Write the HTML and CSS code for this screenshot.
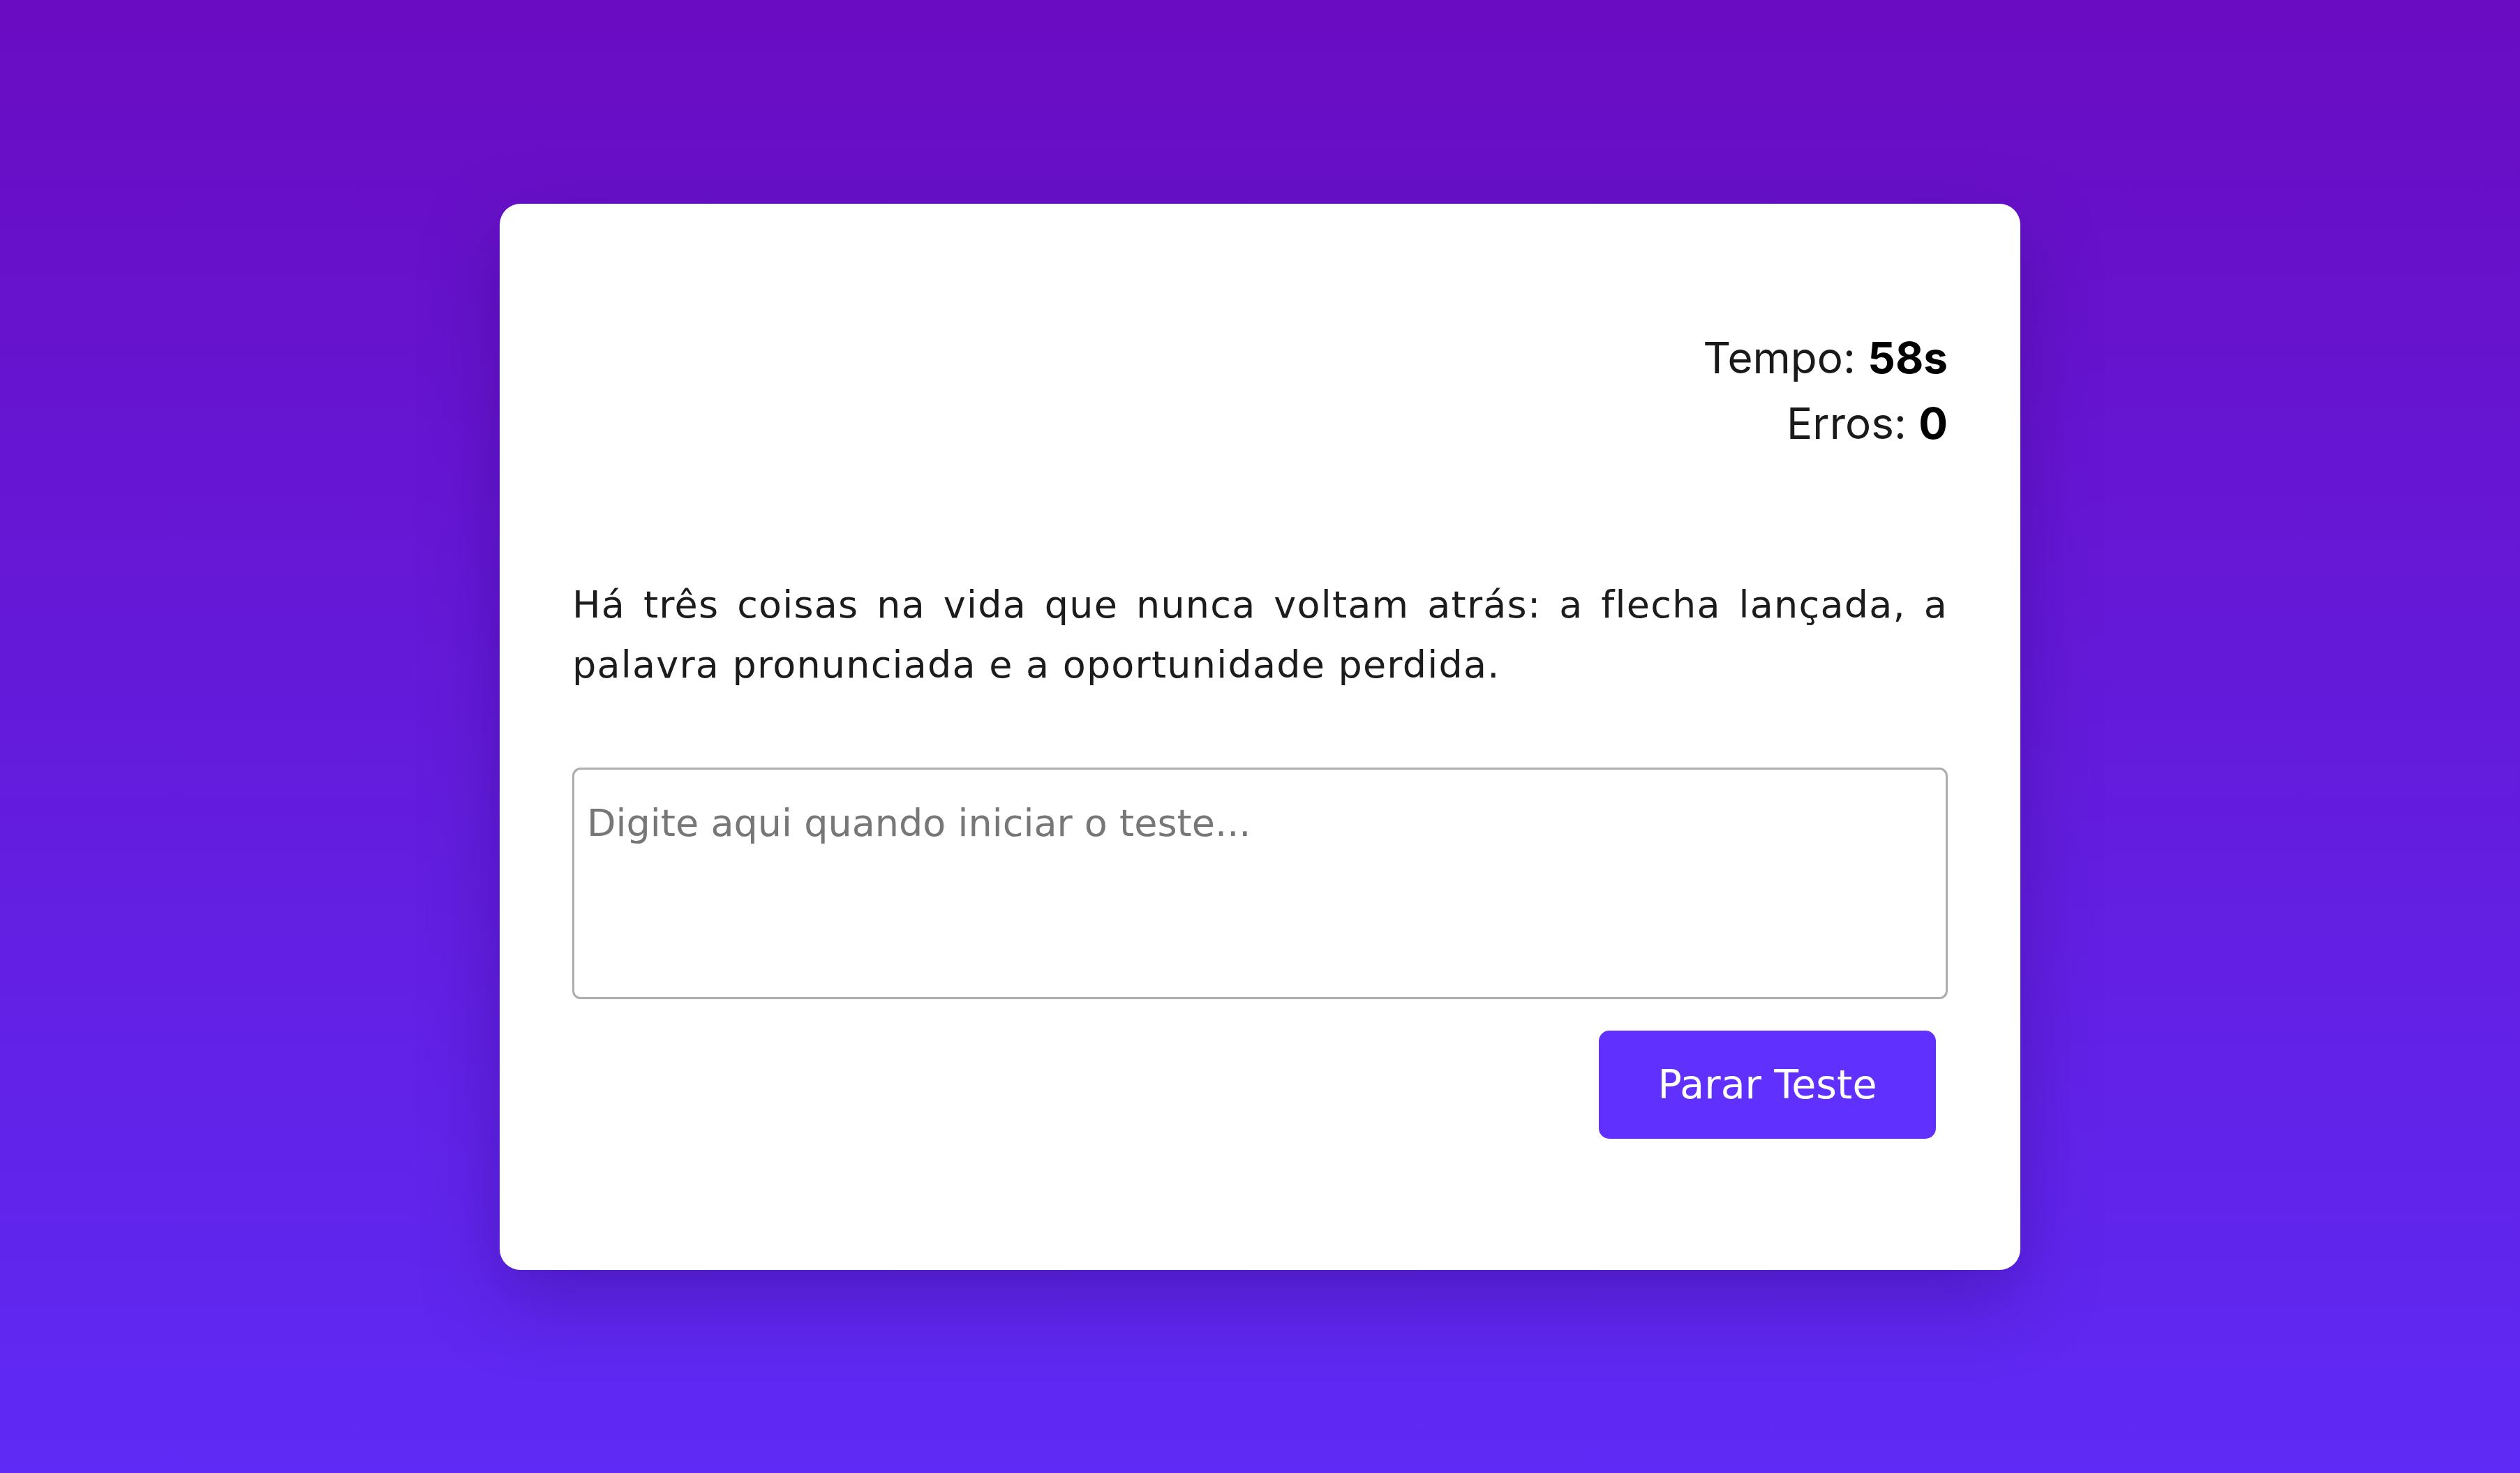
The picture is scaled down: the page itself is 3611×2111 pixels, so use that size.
FILE: index.html
```html
<!DOCTYPE html>
<html lang="pt-BR">
<head>
<meta charset="utf-8">
<title>Teste de Digitação</title>
<link rel="stylesheet" href="styles.css">
</head>
<body>
  <main class="card">
    <div class="stats">
      <div class="stat">Tempo: <strong>58s</strong></div>
      <div class="stat">Erros: <strong>0</strong></div>
    </div>
    <p class="quote">Há três coisas na vida que nunca voltam atrás: a flecha lançada, a palavra pronunciada e a oportunidade perdida.</p>
    <textarea class="typing" placeholder="Digite aqui quando iniciar o teste..."></textarea>
    <div class="actions">
      <button class="btn" type="button">Parar Teste</button>
    </div>
  </main>
</body>
</html>
```
FILE: styles.css
```css
* { box-sizing: border-box; }

html, body { height: 100%; }

body {
  margin: 0;
  min-height: 100vh;
  display: flex;
  align-items: center;
  justify-content: center;
  background: linear-gradient(180deg, #690cc2 0%, #5f2af5 100%);
  font-family: "DejaVu Sans", "Noto Sans", sans-serif;
  color: #1e1e1e;
}

.card {
  width: 2179px;
  background: #ffffff;
  border-radius: 30px;
  padding: 104px;
  box-shadow: 0 40px 110px rgba(40, 0, 110, 0.35);
}

.stats {
  margin-top: 70px;
  text-align: right;
  font-family: Inter, Roboto, sans-serif;
  font-size: 62px;
  line-height: 94px;
  color: #1a1a1a;
}

.stats strong { font-weight: 700; color: #000; }

.quote {
  margin: 170px 0 0;
  font-size: 54px;
  line-height: 86px;
  letter-spacing: 1.2px;
  text-align: justify;
  color: #1c1c1c;
}

.typing {
  display: block;
  width: 100%;
  height: 332px;
  margin-top: 104px;
  padding: 40px 18px 30px;
  border: 3px solid #adadad;
  border-radius: 12px;
  font-family: "DejaVu Sans", "Noto Sans", sans-serif;
  font-size: 54px;
  line-height: 74px;
  color: #222;
  resize: none;
  outline: none;
  background: #fff;
}

.typing::placeholder { color: #777; }

.actions {
  display: flex;
  justify-content: flex-end;
  padding-right: 17px;
  margin-top: 45px;
  margin-bottom: 84px;
}

.btn {
  width: 483px;
  height: 155px;
  border: none;
  border-radius: 15px;
  background: #6030fe;
  color: #fff;
  font-family: "DejaVu Sans", "Noto Sans", sans-serif;
  font-size: 57px;
  cursor: pointer;
}
```
